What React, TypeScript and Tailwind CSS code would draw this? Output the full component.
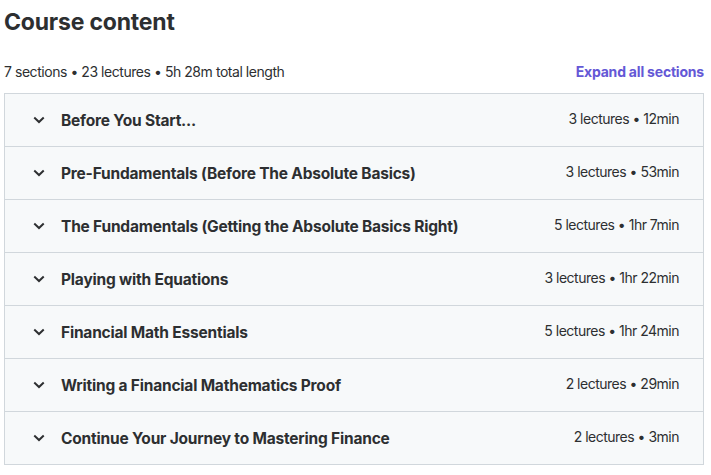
import React from 'react';

const sections = [
  { title: 'Before You Start...', meta: '3 lectures • 12min' },
  { title: 'Pre-Fundamentals (Before The Absolute Basics)', meta: '3 lectures • 53min' },
  { title: 'The Fundamentals (Getting the Absolute Basics Right)', meta: '5 lectures • 1hr 7min' },
  { title: 'Playing with Equations', meta: '3 lectures • 1hr 22min' },
  { title: 'Financial Math Essentials', meta: '5 lectures • 1hr 24min' },
  { title: 'Writing a Financial Mathematics Proof', meta: '2 lectures • 29min' },
  { title: 'Continue Your Journey to Mastering Finance', meta: '2 lectures • 3min' },
];

const Chevron = () => (
  <svg width="12" height="12" viewBox="0 0 12 12" fill="none" className="shrink-0">
    <path d="M2 4.2 L6 8 L10 4.2" stroke="#2d2f31" strokeWidth="2" strokeLinecap="square" />
  </svg>
);

export default function App() {
  return (
    <div className="w-[700px] ml-[4px] bg-white text-[#2d2f31] font-['Inter','Liberation_Sans',sans-serif]">
      <h2 className="text-[23px] leading-[28px] font-bold tracking-[-0.2px] pt-[8px]">Course content</h2>

      <div className="flex items-center justify-between mt-[27px] mb-[12px] text-[14px] leading-[18px]">
        <span className="tracking-[-0.45px]">7 sections • 23 lectures • 5h 28m total length</span>
        <button className="font-bold text-[#6458d6] tracking-[-0.2px]">Expand all sections</button>
      </div>

      <div className="border border-[#d1d7dc]">
        {sections.map((s, i) => (
          <div
            key={s.title}
            className={`flex items-center pl-[28px] pr-[24px] bg-[#f7f9fa] ${i > 0 ? 'h-[53px] border-t border-[#d1d7dc]' : 'h-[52px]'}`}
          >
            <Chevron />
            <span className="ml-[16px] pt-[2px] text-[15.5px] font-bold tracking-[-0.2px] flex-1">{s.title}</span>
            <span className="mb-[3px] text-[14px] tracking-[-0.5px]">{s.meta}</span>
          </div>
        ))}
      </div>
    </div>
  );
}
